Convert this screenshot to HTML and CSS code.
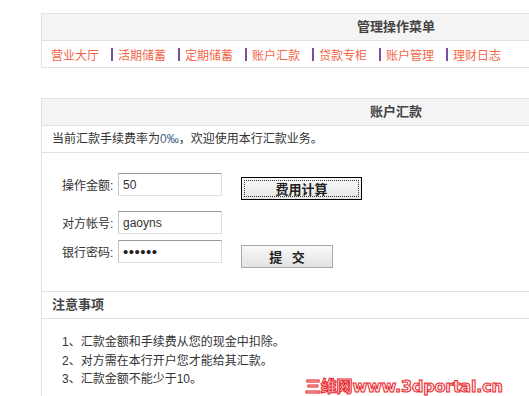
FILE: index.html
```html
<!DOCTYPE html>
<html lang="zh-CN">
<head>
    <meta charset="UTF-8">
    <title>账户汇款</title>
    <link rel="stylesheet" href="styles.css">
</head>
<body>

<div class="panel menu">
    <div class="panel-head">管理操作菜单</div>
    <div class="nav">
        <a href="#">营业大厅</a><span class="sep"></span>
        <a href="#">活期储蓄</a><span class="sep"></span>
        <a href="#">定期储蓄</a><span class="sep"></span>
        <a href="#">账户汇款</a><span class="sep"></span>
        <a href="#">贷款专柜</a><span class="sep"></span>
        <a href="#">账户管理</a><span class="sep"></span>
        <a href="#">理财日志</a>
    </div>
</div>

<div class="panel remit">
    <div class="panel-head">账户汇款</div>
    <div class="info">当前汇款手续费率为<span class="rate">0‰</span>，欢迎使用本行汇款业务。</div>

    <form class="remit-form">
        <div class="row row-amount">
            <label for="amount">操作金额:</label>
            <input type="text" id="amount" value="50">
            <button type="button" class="btn btn-calc">费用计算</button>
        </div>
        <div class="row row-account">
            <label for="account">对方帐号:</label>
            <input type="text" id="account" value="gaoyns">
        </div>
        <div class="row row-pass">
            <label for="pass">银行密码:</label>
            <input type="password" id="pass" class="pass" value="123456">
            <button type="submit" class="btn btn-submit">提 交</button>
        </div>
    </form>

    <div class="notes-head">注意事项</div>
    <ol class="notes">
        <li>1、汇款金额和手续费从您的现金中扣除。</li>
        <li>2、对方需在本行开户您才能给其汇款。</li>
        <li>3、汇款金额不能少于10。</li>
    </ol>
</div>

<div class="watermark">三维网www.3dportal.cn</div>

</body>
</html>
```

FILE: styles.css
```css
html, body {
    overflow: hidden;
}

body {
    margin: 0;
    padding: 13px 0 0 41px;
    font-family: "Liberation Sans", "Noto Sans CJK SC", sans-serif;
    font-size: 12px;
    color: #333;
    background: #fff;
    position: relative;
    height: 396px;
    box-sizing: border-box;
}

.panel {
    width: 708px;
    border: 1px solid #e2e2e2;
}

.remit {
    margin-top: 30px;
    border-bottom: none;
}

.panel-head {
    height: 26px;
    line-height: 26px;
    background-color: #f4f4f4;
    border-bottom: 1px solid #e2e2e2;
    text-align: center;
    font-size: 13px;
    font-weight: bold;
    color: #444;
}

.nav {
    display: flex;
    align-items: center;
    height: 26px;
    padding-left: 9px;
}

.nav a {
    color: #f2674a;
    text-decoration: none;
    font-size: 12px;
}

.nav a:hover {
    text-decoration: underline;
}

.nav .sep {
    width: 0;
    height: 13px;
    border-left: 2px solid #7b4f9d;
    margin: 0 5px 0 12px;
}

.info {
    height: 26px;
    line-height: 26px;
    padding-left: 10px;
    border-bottom: 1px solid #e2e2e2;
}

.rate {
    color: #3d5f8a;
}

.remit-form {
    height: 139px;
    padding: 20px 0 0 20px;
    box-sizing: border-box;
    border-bottom: 1px solid #e2e2e2;
}

.row {
    display: flex;
    align-items: flex-start;
}

.row label {
    width: 56px;
    height: 23px;
    line-height: 26px;
}

.row input {
    width: 104px;
    height: 23px;
    box-sizing: border-box;
    margin: 0;
    padding: 0 4px;
    border: 1px solid #e0e0e0;
    border-top-color: #9a9a9a;
    border-left-color: #c4c4c4;
    font-family: "Liberation Sans", sans-serif;
    font-size: 12px;
    color: #333;
}

.row input.pass {
    font-size: 15px;
    letter-spacing: 0.5px;
    color: #222;
}

.row-amount {
    margin-bottom: 11px;
}

.row-account {
    margin-bottom: 6px;
}

.btn {
    margin-left: 19px;
    height: 23px;
    padding: 0;
    font-family: "Liberation Sans", "Noto Sans CJK SC", sans-serif;
    font-size: 13px;
    font-weight: bold;
    color: #222;
    cursor: pointer;
}

.btn-calc {
    margin-top: 4px;
    width: 121px;
    border: 1px solid #000;
    background: linear-gradient(#fbfbfb, #e4e4e4);
    outline: 1px dotted #333;
    outline-offset: -4px;
}

.btn-submit {
    margin-top: 5px;
    width: 92px;
    border: 1px solid #a8a8a8;
    background: linear-gradient(#f9f9f9, #e2e2e2);
    word-spacing: 6px;
}

.notes-head {
    height: 26px;
    line-height: 26px;
    padding-left: 10px;
    font-size: 13px;
    font-weight: bold;
    color: #444;
    border-bottom: 1px solid #e2e2e2;
}

.notes {
    list-style: none;
    margin: 0;
    padding: 14px 0 20px 20px;
    line-height: 18.5px;
}

.watermark {
    position: absolute;
    left: 305px;
    top: 373px;
    font-family: "DejaVu Sans", "Noto Sans CJK SC", sans-serif;
    font-size: 16px;
    font-weight: bold;
    color: #fde4e4;
    -webkit-text-stroke: 1px #e8262a;
    letter-spacing: -0.2px;
}
```
